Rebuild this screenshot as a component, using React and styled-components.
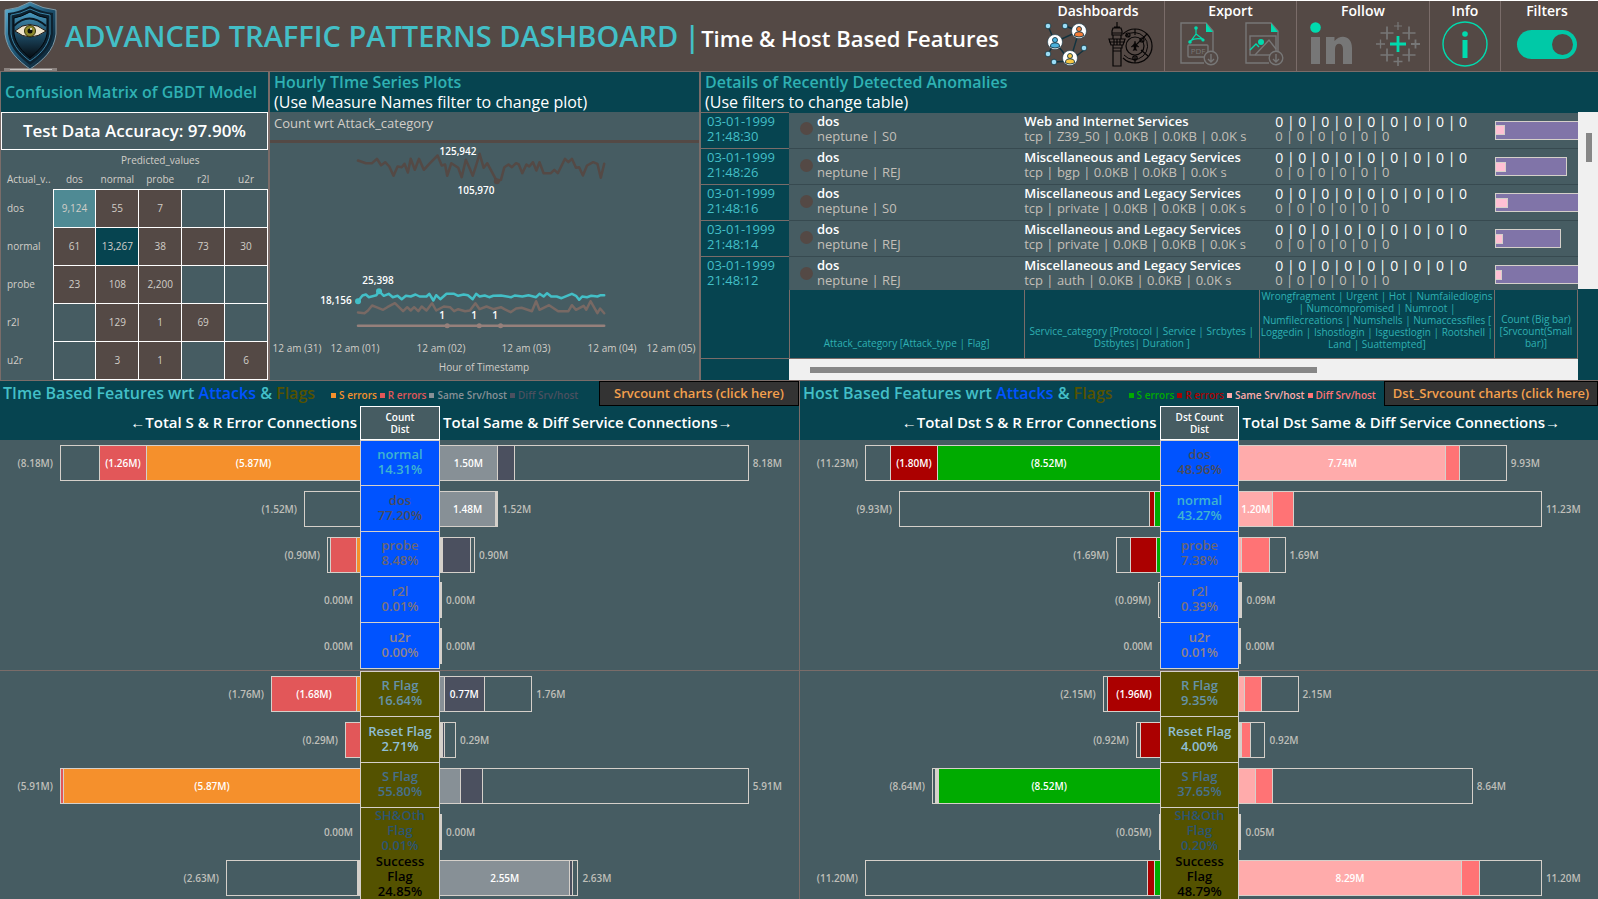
import React from 'react';
import styled, { createGlobalStyle, css } from 'styled-components';

const c = {
  slate: '#465c62',
  teal: '#064450',
  brown: '#544945',
  rule: '#7a6c69',
  cyan: '#43bfc7',
  title: '#2fb1b3',
  mint: '#00dbae',
  line: '#d5d0ca',
  text: '#d2cec8',
  gray: '#777777',
  blue: '#0053ff',
  olive: '#545200',
};

const GlobalStyle = createGlobalStyle`
  * { box-sizing: border-box; }
  body {
    margin: 0;
    background: ${c.slate};
    color: ${c.text};
    font-family: "Trebuchet MS", "Open Sans", "Noto Sans", sans-serif;
    font-size: 10px;
    font-weight: 500;
  }
  h1, h2, h3, p { margin: 0; font-weight: inherit; font-size: inherit; }
  table { border-collapse: collapse; border-spacing: 0; }
  th, td { font-weight: inherit; padding: 0; }
  button, input { font: inherit; margin: 0; }
`;

const Page = styled.div`
  min-height: 100vh;
  border-top: 1px solid #ffffff;
  overflow: hidden;
`;

/* ---------- header ---------- */

const Header = styled.header`
  display: flex;
  align-items: stretch;
  height: 71px;
  background: ${c.brown};
  border-bottom: 1px solid ${c.rule};
`;

const Brand = styled.div`
  flex: 1;
  display: flex;
  align-items: center;
  min-width: 0;
  padding-left: 4px;
  white-space: nowrap;
`;

const Heading = styled.h1`
  display: flex;
  align-items: baseline;
  margin-left: 8px;
  padding-top: 2px;
  color: ${c.cyan};
  font-size: 29px;
  font-weight: 600;
  line-height: 40px;
`;

const Divider = styled.span`
  margin: 0 1px 0 6px;
`;

const Subheading = styled.span`
  color: #ffffff;
  font-size: 22px;
  font-weight: 600;
`;

const ToolGroup = styled.section`
  width: ${(p) => p.$width}px;
  flex: none;
  display: flex;
  flex-direction: column;
  align-items: center;
  padding-right: ${(p) => (p.$last ? 5 : 0)}px;
  border-left: ${(p) => (p.$first ? 'none' : `1px solid ${c.rule}`)};
`;

const ToolTitle = styled.h2`
  height: 20px;
  line-height: 20px;
  color: #ffffff;
  font-size: 14px;
  font-weight: 600;
`;

const ToolRow = styled.div`
  display: flex;
  align-items: center;
  gap: ${(p) => p.$gap || 0}px;
  height: 46px;
  padding-left: ${(p) => p.$inset || 0}px;
`;

const iconButton = css`
  display: flex;
  padding: 0;
  border: 0;
  background: none;
  cursor: pointer;
`;
const IconLink = styled.a`${iconButton}`;
const IconButton = styled.button`${iconButton}`;

const Toggle = styled.input`
  appearance: none;
  width: 60px;
  height: 29px;
  padding: 4px;
  border-radius: 15px;
  background: #00c9a7;
  display: flex;
  justify-content: flex-end;
  cursor: pointer;
  &::after {
    content: '';
    width: 21px;
    height: 21px;
    border-radius: 50%;
    background: ${c.brown};
  }
`;

/* ---------- upper panels ---------- */

const UpperGrid = styled.main`
  display: grid;
  grid-template-columns: 270fr 431fr 897fr;
  border-bottom: 1px solid ${c.rule};
`;

const Panel = styled.section`
  min-width: 0;
  display: flex;
  flex-direction: column;
  border-right: ${(p) => (p.$last ? 0 : 2)}px solid ${c.rule};
  border-left: ${(p) => (p.$first ? 1 : 0)}px solid ${c.rule};
`;

const PanelHead = styled.div`
  height: 40px;
  padding-left: 4px;
  display: flex;
  flex-direction: column;
  justify-content: center;
  background: ${c.teal};
  line-height: 20px;
  white-space: nowrap;
`;

const PanelTitle = styled.h2`
  color: ${c.title};
  font-size: 16px;
  font-weight: 600;
`;

const PanelHint = styled.p`
  color: #ffffff;
  font-size: 16px;
`;

const Accuracy = styled.p`
  height: 38px;
  border: 1px solid #ffffff;
  color: #ffffff;
  font-size: 17px;
  font-weight: 600;
  line-height: 36px;
  text-align: center;
`;

const MatrixTable = styled.table`
  width: 100%;
  table-layout: fixed;
  text-align: center;
  color: ${c.text};
`;
const MatrixCaption = styled.th`
  height: 19px;
`;
const MatrixHead = styled.th`
  height: 20px;
  text-align: ${(p) => (p.$left ? 'left' : 'center')};
  padding-left: ${(p) => (p.$left ? 6 : 0)}px;
  white-space: nowrap;
`;
const MatrixRow = styled.tr`
  height: 38px;
`;
const MatrixLabel = styled.th`
  padding-left: 6px;
  text-align: left;
`;
const MatrixCell = styled.td`
  border: 1px solid #ffffff;
  background: ${(p) => p.$fill};
`;

const PlotLabel = styled.h3`
  height: 31px;
  padding: 1px 4px 0;
  border-bottom: 3px solid ${c.brown};
  font-size: 13px;
  line-height: 20px;
  color: ${c.text};
`;

const Plot = styled.svg`
  display: block;
  width: 100%;
  flex: 1;
  height: 236px;
`;

/* ---------- anomalies table ---------- */

const TableFrame = styled.div`
  display: flex;
  flex: 1;
  background: ${c.teal};
`;
const TableMain = styled.div`
  flex: 1;
  min-width: 0;
`;
const AnomalyTable = styled.table`
  width: 100%;
  table-layout: fixed;
  font-size: 13px;
  line-height: 15px;
  white-space: nowrap;
`;
const DateCol = styled.col`
  width: 88px;
`;
const BarCol = styled.col`
  width: 83px;
`;
const AnomalyRow = styled.tr`
  height: ${(p) => (p.$cut ? 33 : 36)}px;
  background: ${c.slate};
`;
const AnomalyCell = styled.td`
  border-top: ${(p) => (p.$top ? 0 : 1)}px solid #374a50;
  padding: 0;
  color: #c3bfb8;
  font-weight: 400;
  vertical-align: top;
`;
const CellLines = styled.div`
  height: ${(p) => (p.$cut ? 32 : 35)}px;
  padding-top: 1px;
`;
const DateCell = styled.th`
  border-top: 1px solid ${c.rule};
  padding: 1px 0 0 6px;
  background: ${c.teal};
  color: ${c.cyan};
  text-align: left;
  vertical-align: top;
`;
const AttackLines = styled.div`
  display: flex;
  align-items: center;
  gap: 4px;
  padding-left: 11px;
`;
const Dot = styled.span`
  width: 13px;
  height: 13px;
  border-radius: 50%;
  background: ${c.brown};
`;
const Strong = styled.strong`
  display: block;
  color: #ffffff;
  font-weight: ${(p) => (p.$bold ? 600 : 500)};
`;
const Zeros = styled.div`
  padding-left: 16px;
`;
const WideZeros = styled(Strong)`
  font-size: 14px;
`;
const CountBar = styled.div`
  display: flex;
  align-items: center;
  width: ${(p) => p.$size}px;
  height: 19px;
  margin-top: 8px;
  border: 1px solid ${c.line};
  border-right-width: ${(p) => (p.$size > 80 ? 0 : 1)}px;
  background: #8074a8;
`;
const SmallBar = styled.div`
  width: ${(p) => p.$size}px;
  height: 10px;
  border: 1px solid ${c.line};
  border-left: 0;
  background: #ffc0d4;
`;
const FootRow = styled.tr`
  height: 69px;
  background: ${c.teal};
`;
const FootCell = styled.td`
  border: 1px solid ${c.rule};
  border-left-width: ${(p) => (p.$first ? 0 : 1)}px;
  border-top: 0;
  padding: 0 0 ${(p) => p.$bottom || 0}px;
  vertical-align: ${(p) => (p.$bottom ? 'bottom' : 'top')};
  color: ${c.title};
  font-size: 10px;
  line-height: 12px;
  text-align: center;
  white-space: normal;
`;
const ScrollX = styled.div`
  height: 21px;
  margin-left: 88px;
  padding: 8px 0 0 21px;
  background: #f0f0f0;
`;
const ThumbX = styled.div`
  width: 66%;
  height: 6px;
  background: #868686;
`;
const ScrollSide = styled.div`
  width: 20px;
  flex: none;
`;
const ScrollY = styled.div`
  height: 177px;
  padding: 21px 0 0 8px;
  background: #f0f0f0;
`;
const ThumbY = styled.div`
  width: 6px;
  height: 29px;
  background: #868686;
`;

/* ---------- lower diverging bar charts ---------- */

const LowerGrid = styled.div`
  display: grid;
  grid-template-columns: 800fr 798fr;
`;
const Half = styled.section`
  min-width: 0;
  border-right: ${(p) => (p.$first ? 1 : 0)}px solid ${c.rule};
`;
const HalfHead = styled.div`
  background: ${c.teal};
  white-space: nowrap;
`;
const TitleBar = styled.div`
  display: flex;
  align-items: center;
  height: 25px;
  padding-left: 3px;
`;
const HalfTitle = styled.h2`
  padding-bottom: 2px;
  color: ${c.cyan};
  font-size: 16px;
  font-weight: 600;
  line-height: 22px;
`;
const Tint = styled.span`
  color: ${(p) => p.$color};
`;
const Legend = styled.ul`
  display: flex;
  flex: 1;
  gap: 3px;
  margin: 3px 0 0 16px;
  padding: 0;
  list-style: none;
  font-weight: 600;
`;
const LegendItem = styled.li`
  display: flex;
  align-items: center;
  gap: 3px;
  color: ${(p) => p.$color};
  &::before {
    content: '';
    width: 5px;
    height: 5px;
    background: ${(p) => p.$color};
  }
`;
const ChartButton = styled.button`
  align-self: stretch;
  flex: none;
  width: ${(p) => p.$width}px;
  padding: 0 0 2px;
  border: 1px solid #000000;
  background: #333333;
  color: #f4a04e;
  font-size: 13px;
  font-weight: 600;
  line-height: 20px;
  cursor: pointer;
`;
const split = css`
  display: grid;
  grid-template-columns: 360fr 80fr 359fr;
`;
const AxisRow = styled.div`
  ${split}
  height: 34px;
  color: #ffffff;
  font-size: 10px;
  font-weight: 600;
`;
const AxisTitle = styled.h3`
  padding: 0 3px;
  font-size: 15px;
  line-height: 32px;
  text-align: ${(p) => (p.$left ? 'right' : 'left')};
`;
const AxisCenter = styled.div`
  display: flex;
  align-items: center;
  justify-content: center;
  border: 1px solid #ffffff;
  background: ${c.slate};
  line-height: 12px;
  text-align: center;
  white-space: pre-line;
`;
const Group = styled.div`
  display: grid;
  grid-template-rows: 46px 46px 45px 46px 46px;
  & + & {
    margin-top: 1px;
    border-top: 1px solid ${c.rule};
  }
`;
const ChartRow = styled.div`
  ${split}
`;
const Category = styled.div`
  display: flex;
  align-items: center;
  justify-content: center;
  padding-bottom: 2px;
  border: 1px solid ${c.line};
  border-top-width: ${(p) => (p.$top ? 1 : 0)}px;
  background: ${(p) => p.$fill};
  color: ${(p) => p.$ink};
  font-size: 13px;
  font-weight: 600;
  line-height: 15px;
  text-align: center;
  white-space: pre-line;
`;
const Side = styled.div`
  display: flex;
  flex-direction: ${(p) => (p.$left ? 'row-reverse' : 'row')};
  align-items: center;
  gap: ${(p) => (p.$left ? 7 : 4)}px;
  min-width: 0;
`;
const Bar = styled.div`
  display: flex;
  height: 36px;
  border: 1px solid ${c.line};
  border-right-width: ${(p) => (p.$left ? 0 : 1)}px;
  border-left-width: ${(p) => (p.$left ? 1 : 0)}px;
`;
const Segment = styled.div`
  display: flex;
  align-items: center;
  justify-content: center;
  flex: ${(p) => p.$size} 1 0;
  min-width: 0;
  background: ${(p) => p.$fill};
  color: #ffffff;
  font-weight: 600;
  white-space: nowrap;
  & + & {
    border-left: 1px solid ${c.line};
  }
`;
const Total = styled.span`
  color: #bfbfb9;
  font-weight: 600;
`;

/* ---------- drawings ---------- */

const ShieldLogo = () => (
  <svg width="53" height="70" viewBox="0 0 53 70" aria-label="Shield logo">
    <defs>
      <linearGradient id="steel" x1="0" y1="0" x2="1" y2="1">
        <stop offset="0" stopColor="#5fb4d8" />
        <stop offset=".45" stopColor="#1f5878" />
        <stop offset="1" stopColor="#06121c" />
      </linearGradient>
      <linearGradient id="face" x1="0" y1="0" x2="0" y2="1">
        <stop offset="0" stopColor="#4b9cc2" />
        <stop offset=".5" stopColor="#1d4a63" />
        <stop offset="1" stopColor="#050b11" />
      </linearGradient>
    </defs>
    <path d="M0 67h53v3H0z" fill="#8a827f" />
    <path d="M6 68h42v1H6z" fill="#c9c4c1" />
    <path d="M26 1Q14 8 1 9V33C3 50 15 60 26 68C38 60 50 50 52 33V9Q39 8 26 1Z" fill="url(#steel)" stroke="#7d9aa8" />
    <path d="M26 5Q15 11 4 12V33C6 48 17 57 26 64C36 57 47 48 49 33V12Q38 11 26 5Z" fill="#0d2230" />
    <path d="M26 8Q16 13 7 14V33C9 46 18 54 26 60C35 54 44 46 46 33V14Q36 13 26 8Z" fill="none" stroke="#3a83a6" />
    <path d="M26 11Q17 16 10 17V33C12 44 19 51 26 57C33 51 41 44 43 33V17Q35 16 26 11Z" fill="url(#face)" stroke="#02070b" />
    <path d="M10 25Q25 10 42 25" fill="none" stroke="#0a1822" strokeWidth="2" />
    <path d="M11 30Q25 17 42 30Q26 42 11 30Z" fill="#efe4cb" stroke="#1b1512" />
    <circle cx="26" cy="30" r="5.500" fill="#8f8a2c" stroke="#34340f" />
    <circle cx="26" cy="30" r="2.500" fill="#0c0c08" />
    <circle cx="27" cy="28" r="1" fill="#fff" />
  </svg>
);

const Person = ({ x, y, color }) => (
  <g transform={`translate(${x} ${y})`}>
    <circle r="7.5" fill="#fff" stroke="#17394a" strokeWidth=".6" />
    <circle cy="-2" r="2.5" fill={color} stroke="#143949" strokeWidth=".9" />
    <path d="M-4.4 5V3Q-4 .8 0 .8T4.4 3V5Q0 7 -4.4 5Z" fill={color} stroke="#143949" strokeWidth=".9" />
  </g>
);

const NetworkIcon = () => (
  <svg width="44" height="44" viewBox="0 0 44 44">
    <path d="M4 4L11 20L35 9L26 39L40 28M11 20L26 39M11 20L4 32M21 4L35 9M26 39L10 40" fill="none" stroke="#12333f" strokeWidth="1.4" />
    {[[4, 4], [21, 4], [40, 26], [4, 32], [10, 40]].map(([x, y]) => (
      <circle key={`${x}-${y}`} cx={x} cy={y} r="2.8" fill="#9bdcf5" stroke="#12333f" strokeWidth=".8" />
    ))}
    <Person x={35} y={9} color="#f47c36" />
    <Person x={11} y={20} color="#4cb2dd" />
    <Person x={26} y={36} color="#f8c642" />
  </svg>
);

const RadarIcon = () => (
  <svg width="45" height="45" viewBox="0 0 45 45" fill="none" stroke="#080606" strokeWidth="1.2">
    <path d="M9 0V5M6 5H12M4 9L5 6H13L14 9V13H4ZM5 13V17M13 13V17M1 17H17L15 23H3ZM5 23V26H14V23M5 26V44H13V26M1 20H17M6 17V23M9 17V23M12 17V23M4 11H14M5 29H13" />
    <path d="M15 12A17 17 0 1 1 15 36" />
    <path d="M17 14A13.5 13.5 0 1 1 16 33" strokeWidth="1" />
    <circle cx="27" cy="24" r="9" />
    <path d="M27 7V13M27 35V41M27 24L39 12M18 11L21 15M33 28L40 34" />
    <circle cx="20" cy="13" r="2" /><circle cx="34" cy="18" r="2" /><circle cx="27" cy="36" r="2.2" />
    <path d="M27 19L28 22L31 25L28 24.500V27L29 28.500L27 28L25 28.500L26 27V24.500L23 25L26 22Z" fill="#080606" strokeWidth=".5" />
  </svg>
);

const DownloadBadge = () => (
  <>
    <circle cx="31" cy="36" r="6.800" fill={c.brown} />
    <path d="M31 32V40M28 37L31 40L34 37" />
  </>
);

const PdfIcon = () => (
  <svg width="40" height="44" viewBox="0 0 40 44" fill="none" stroke={c.gray} strokeWidth="1.4">
    <path d="M24 41H1V1H26L33 9V29" />
    <path d="M26 1V10H33Z" fill={c.mint} stroke="none" />
    <path d="M16 6V12L10 20M16 12L24 18M10 19Q17 15 24 18" stroke={c.mint} strokeWidth="1.2" />
    <circle cx="16" cy="6" r="1.800" fill={c.mint} stroke="none" /><circle cx="10" cy="20" r="1.800" fill={c.mint} stroke="none" /><circle cx="23" cy="18" r="1.600" fill={c.mint} stroke="none" />
    <rect x="8" y="23" width="20" height="12" rx="1" fill={c.brown} />
    <text x="18" y="32" textAnchor="middle" fontSize="8" fill={c.gray} stroke="none">PDF</text>
    <DownloadBadge />
  </svg>
);

const ImageIcon = () => (
  <svg width="40" height="44" viewBox="0 0 40 44" fill="none" stroke={c.gray} strokeWidth="1.4">
    <path d="M24 41H1V1H26L33 9V29" />
    <path d="M26 1V10H33Z" fill={c.mint} stroke="none" />
    <rect x="5" y="14" width="26" height="19" />
    <path d="M10 33L24 18L31 27" />
    <path d="M5 28L11 22L14 25" stroke={c.mint} />
    <circle cx="16" cy="20" r="3" fill={c.mint} stroke="none" />
    <DownloadBadge />
  </svg>
);

const LinkedInIcon = () => (
  <svg width="42" height="44" viewBox="0 0 42 44" fill={c.gray}>
    <circle cx="5.500" cy="5.500" r="5.300" fill={c.mint} />
    <path d="M1 15H10V42H1ZM16 15H24.500V19C30 12 42 13 42 26V42H33V27C33 20 25 20 25 27V42H16Z" />
  </svg>
);

const PLUSES = [
  [22, 4, 4, 1.2], [11, 11, 6.500, 1.7], [33, 11, 6.500, 1.7], [4.500, 22, 4.500, 1.3],
  [39.500, 22, 4.500, 1.8], [11, 33, 6.500, 1.7], [33, 33, 6.500, 1.7], [22, 39.500, 4.500, 1.6],
];
const TableauIcon = () => (
  <svg width="44" height="44" viewBox="0 0 44 44" fill="none">
    {PLUSES.map(([x, y, r, w]) => (
      <path key={`${x}-${y}`} d={`M${x - r} ${y}h${2 * r}M${x} ${y - r}v${2 * r}`} stroke={c.gray} strokeWidth={w} />
    ))}
    <path d="M14 22H30M22 14V30" stroke={c.mint} strokeWidth="2.800" />
  </svg>
);

const InfoIcon = () => (
  <svg width="46" height="46" viewBox="0 0 46 46" fill={c.mint}>
    <circle cx="23" cy="23" r="22" fill="none" stroke={c.mint} strokeWidth="1.4" />
    <circle cx="23" cy="13" r="2.800" />
    <path d="M20.500 19H25.500V37H20.500Z" />
  </svg>
);

/* ---------- hourly series ---------- */

const SERIES = [
  {
    name: 'dos', color: '#544945',
    points: '0,480 23,488 41,488 55,475 67,494 79,485 91,498 103,526 115,498 127,500 135,490 145,516 153,475 165,508 177,475 191,508 207,490 231,465 243,495 253,492 259,526 271,488 281,495 291,502 301,530 313,478 323,500 333,526 343,495 353,460 365,502 375,488 389,515 403,542 415,538 425,500 437,492 447,500 459,488 467,492 477,518 489,492 497,498 508,485 518,510 527,485 539,518 560,518 570,508 580,518 601,475 611,485 621,475 633,502 642,500 653,525 665,495 683,485 695,490 705,532 715,490',
  },
  {
    name: 'normal', color: '#43bfc7',
    points: '0,902 13,885 23,882 31,890 53,884 61,872 75,886 89,880 101,890 115,886 127,896 139,886 153,888 167,882 179,888 199,888 207,880 219,900 227,884 239,896 257,880 279,880 291,886 307,882 319,884 333,896 343,880 353,888 368,885 381,890 393,886 415,885 445,890 455,885 477,888 495,884 517,890 527,880 539,888 549,878 561,888 577,888 591,893 621,880 633,886 642,898 651,888 665,890 677,886 695,888 705,884 715,884',
  },
  {
    name: 'probe', color: '#786964',
    points: '0,936 19,938 29,930 41,915 53,920 73,928 85,920 107,908 119,920 131,932 143,920 153,930 163,920 175,932 185,918 199,930 215,908 227,930 249,918 267,920 279,932 291,926 311,932 325,930 341,908 353,926 373,918 393,926 415,920 425,926 443,935 459,924 475,922 505,932 517,902 527,928 555,914 581,932 611,932 621,914 633,928 655,916 663,928 675,902 695,938 703,924 715,938',
  },
  { name: 'u2r', color: '#96807b', points: '0,976 715,976' },
];
const plotX = (v) => 88 + v * 0.3444;
const plotY = (v) => (v - 429) / 3;
const toPath = (points) =>
  points.split(' ').map((p) => {
    const [x, y] = p.split(',').map(Number);
    return `${plotX(x).toFixed(1)},${plotY(y).toFixed(1)}`;
  }).join(' ');

const MARKS = [
  [403, 542, 3, '#544945'], [0, 902, 3, '#43bfc7'], [61, 872, 3, '#43bfc7'],
  [259, 976, 2.5, '#96807b'], [352, 976, 2.5, '#96807b'], [414, 976, 2.5, '#96807b'],
];
const VALUE_LABELS = [
  [188, 11, '125,942'], [206, 50, '105,970'], [108, 140, '25,398'], [66, 160, '18,156'],
  [172, 175, '1'], [204, 175, '1'], [225, 175, '1'],
];
const TICKS = [
  [27, '12 am (31)'], [85, '12 am (01)'], [171, '12 am (02)'],
  [256, '12 am (03)'], [342, '12 am (04)'], [401, '12 am (05)'],
];

const HourlyPlot = () => (
  <Plot viewBox="0 0 429 236" role="img" aria-label="Count by hour of timestamp">
    {SERIES.map((s) => (
      <polyline key={s.name} points={toPath(s.points)} fill="none" stroke={s.color} strokeWidth="2.5" strokeLinejoin="round" strokeLinecap="round" />
    ))}
    {MARKS.map(([x, y, r, color]) => (
      <circle key={`${x}-${y}`} cx={plotX(x)} cy={plotY(y)} r={r} fill={color} />
    ))}
    <g textAnchor="middle" fontSize="10" fontWeight="600" fill="#ffffff">
      {VALUE_LABELS.map(([x, y, label]) => <text key={x} x={x} y={y}>{label}</text>)}
    </g>
    <g textAnchor="middle" fontSize="10" fill={c.text}>
      {TICKS.map(([x, label]) => <text key={x} x={x} y="208">{label}</text>)}
      <text x="214" y="227">Hour of Timestamp</text>
    </g>
  </Plot>
);

/* ---------- data ---------- */

const CLASSES = ['dos', 'normal', 'probe', 'r2l', 'u2r'];
const MATRIX = [
  ['9,124', '55', '7', '', ''],
  ['61', '13,267', '38', '73', '30'],
  ['23', '108', '2,200', '', ''],
  ['', '129', '1', '69', ''],
  ['', '3', '1', '', '6'],
];
const cellFill = (v) => {
  if (v === '9,124') return '#4f8a94';
  if (v === '13,267') return c.teal;
  return v ? c.brown : 'transparent';
};

const MISC = 'Miscellaneous and Legacy Services';
const ANOMALIES = [
  { time: '21:48:30', flag: 'S0', service: 'Web and Internet Services', port: 'Z39_50', bar: 83, small: 9 },
  { time: '21:48:26', flag: 'REJ', service: MISC, port: 'bgp', bar: 72, small: 10 },
  { time: '21:48:16', flag: 'S0', service: MISC, port: 'private', bar: 83, small: 12 },
  { time: '21:48:14', flag: 'REJ', service: MISC, port: 'private', bar: 66, small: 7 },
  { time: '21:48:12', flag: 'REJ', service: MISC, port: 'auth', bar: 83, small: 6 },
];
const zeros = (n) => Array(n).fill('0').join(' | ');

const NONE = 'transparent';
const LEFT_PALETTE = { s: '#f5902c', r: '#e25759', same: '#879096', diff: '#4b505f', x: NONE, l: c.line };
const RIGHT_PALETTE = { s: '#00ab00', r: '#ab0000', same: '#ffabab', diff: '#ff7375', x: NONE, l: c.line };
const INK = {
  normal: '#3fb4cf', dos: '#4b4c5c', probe: '#6a6672', r2l: '#7d747c', u2r: '#918489',
  rf: '#6593a8', reset: '#8fbfd6', sf: '#46708c', sh: '#2b5573', ok: '#000000',
};

/* Each bar is a list of [kind, units, label], in the order drawn. */
const TIME_ROWS = [
  [
    { name: 'normal', pct: '14.31%', ink: INK.normal, left: [['x', 38], ['r', 47, '(1.26M)'], ['s', 215, '(5.87M)']], lt: '(8.18M)', right: [['same', 57, '1.50M'], ['diff', 17], ['x', 234]], rt: '8.18M' },
    { name: 'dos', pct: '77.20%', ink: INK.dos, left: [['x', 56]], lt: '(1.52M)', right: [['same', 57, '1.48M'], ['l', 1]], rt: '1.52M' },
    { name: 'probe', pct: '8.48%', ink: INK.probe, left: [['x', 2], ['r', 28], ['s', 3]], lt: '(0.90M)', right: [['l', 2], ['diff', 30], ['x', 3]], rt: '0.90M' },
    { name: 'r2l', pct: '0.01%', ink: INK.r2l, left: [], lt: '0.00M', right: [['l', 2]], rt: '0.00M' },
    { name: 'u2r', pct: '0.00%', ink: INK.u2r, left: [], lt: '0.00M', right: [['l', 2]], rt: '0.00M' },
  ],
  [
    { name: 'R Flag', pct: '16.64%', ink: INK.rf, left: [['r', 86, '(1.68M)'], ['s', 3]], lt: '(1.76M)', right: [['same', 4], ['diff', 40, '0.77M'], ['x', 48]], rt: '1.76M' },
    { name: 'Reset Flag', pct: '2.71%', ink: INK.reset, left: [['r', 15]], lt: '(0.29M)', right: [['l', 2], ['diff', 2], ['x', 12]], rt: '0.29M' },
    { name: 'S Flag', pct: '55.80%', ink: INK.sf, left: [['r', 2], ['s', 298, '(5.87M)']], lt: '(5.91M)', right: [['same', 20], ['diff', 21], ['x', 267]], rt: '5.91M' },
    { name: 'SH&Oth\nFlag', pct: '0.01%', ink: INK.sh, left: [], lt: '0.00M', right: [['l', 2]], rt: '0.00M' },
    { name: 'Success\nFlag', pct: '24.85%', ink: INK.ok, left: [['x', 132], ['l', 2]], lt: '(2.63M)', right: [['same', 132, '2.55M'], ['diff', 2], ['x', 4]], rt: '2.63M' },
  ],
];
const HOST_ROWS = [
  [
    { name: 'dos', pct: '48.96%', ink: INK.dos, left: [['x', 24], ['r', 47, '(1.80M)'], ['s', 224, '(8.52M)']], lt: '(11.23M)', right: [['same', 208, '7.74M'], ['diff', 13], ['x', 46]], rt: '9.93M' },
    { name: 'normal', pct: '43.27%', ink: INK.normal, left: [['x', 252], ['r', 4], ['s', 5]], lt: '(9.93M)', right: [['same', 33, '1.20M'], ['diff', 20], ['x', 249]], rt: '11.23M' },
    { name: 'probe', pct: '7.38%', ink: INK.probe, left: [['x', 14], ['r', 27], ['s', 3]], lt: '(1.69M)', right: [['same', 2], ['diff', 28], ['x', 16]], rt: '1.69M' },
    { name: 'r2l', pct: '0.39%', ink: INK.r2l, left: [['x', 2]], lt: '(0.09M)', right: [['l', 3]], rt: '0.09M' },
    { name: 'u2r', pct: '0.01%', ink: INK.u2r, left: [], lt: '0.00M', right: [['l', 2]], rt: '0.00M' },
  ],
  [
    { name: 'R Flag', pct: '9.35%', ink: INK.rf, left: [['x', 4], ['r', 53, '(1.96M)']], lt: '(2.15M)', right: [['same', 5], ['diff', 17], ['x', 37]], rt: '2.15M' },
    { name: 'Reset Flag', pct: '4.00%', ink: INK.reset, left: [['x', 4], ['r', 20]], lt: '(0.92M)', right: [['l', 2], ['diff', 9], ['x', 15]], rt: '0.92M' },
    { name: 'S Flag', pct: '37.65%', ink: INK.sf, left: [['x', 2], ['l', 2], ['s', 224, '(8.52M)']], lt: '(8.64M)', right: [['same', 16], ['diff', 16], ['x', 201]], rt: '8.64M' },
    { name: 'SH&Oth\nFlag', pct: '0.20%', ink: INK.sh, left: [['l', 1]], lt: '(0.05M)', right: [['l', 2]], rt: '0.05M' },
    { name: 'Success\nFlag', pct: '48.79%', ink: INK.ok, left: [['x', 284], ['r', 6], ['s', 5]], lt: '(11.20M)', right: [['same', 223, '8.29M'], ['diff', 18], ['x', 61]], rt: '11.20M' },
  ],
];

/* ---------- composed parts ---------- */

const LEFT_UNITS = 360;
const RIGHT_UNITS = 358;

const SideBar = ({ segments, total, palette, left }) => {
  const units = segments.reduce((sum, s) => sum + s[1], 0);
  const scale = left ? LEFT_UNITS : RIGHT_UNITS;
  return (
    <Side $left={left}>
      {units > 0 ? (
        <Bar $left={left} style={{ width: `${(units / scale) * 100}%` }}>
          {segments.map(([kind, size, label], i) => (
            <Segment key={i} $size={size} $fill={palette[kind]}>{label}</Segment>
          ))}
        </Bar>
      ) : <span />}
      <Total>{total}</Total>
    </Side>
  );
};

const FeatureHalf = ({ first, title, palette, legend, button, buttonWidth, leftTitle, center, rightTitle, groups }) => (
  <Half $first={first}>
    <HalfHead>
      <TitleBar>
        <HalfTitle>
          {title} <Tint $color={c.blue}>Attacks</Tint> &amp; <Tint $color={c.olive}>Flags</Tint>
        </HalfTitle>
        <Legend>
          {['S errors', 'R errors', 'Same Srv/host', 'Diff Srv/host'].map((label, i) => (
            <LegendItem key={label} $color={legend[i]}>{label}</LegendItem>
          ))}
        </Legend>
        <ChartButton type="button" $width={buttonWidth}>{button}</ChartButton>
      </TitleBar>
      <AxisRow>
        <AxisTitle $left>{leftTitle}</AxisTitle>
        <AxisCenter>{center}</AxisCenter>
        <AxisTitle>{rightTitle}</AxisTitle>
      </AxisRow>
    </HalfHead>
    {groups.map((rows, g) => (
      <Group key={g}>
        {rows.map((row, i) => (
          <ChartRow key={row.name}>
            <SideBar left segments={row.left} total={row.lt} palette={palette} />
            <Category $top={i === 0} $fill={g ? c.olive : c.blue} $ink={row.ink}>{`${row.name}\n${row.pct}`}</Category>
            <SideBar segments={row.right} total={row.rt} palette={palette} />
          </ChartRow>
        ))}
      </Group>
    ))}
  </Half>
);

const FOOT = [
  ['Attack_category [Attack_type | Flag]', 9],
  ['Service_category [Protocol | Service | Srcbytes | Dstbytes| Duration ]', 9],
  ['Wrongfragment | Urgent | Hot | Numfailedlogins | Numcompromised | Numroot | Numfilecreations | Numshells | Numaccessfiles [ Loggedin | Ishostlogin | Isguestlogin | Rootshell | Land | Suattempted]', 0],
  ['Count (Big bar) [Srvcount(Small bar)]', 9],
];

export default function App() {
  return (
    <Page>
      <GlobalStyle />
      <Header>
        <Brand>
          <ShieldLogo />
          <Heading>
            ADVANCED TRAFFIC PATTERNS DASHBOARD
            <Divider>|</Divider>
            <Subheading>Time &amp; Host Based Features</Subheading>
          </Heading>
        </Brand>
        <ToolGroup $first $width={132}>
          <ToolTitle>Dashboards</ToolTitle>
          <ToolRow $gap={20}>
            <IconLink href="#network" aria-label="Network dashboard"><NetworkIcon /></IconLink>
            <IconLink href="#traffic" aria-label="Traffic dashboard"><RadarIcon /></IconLink>
          </ToolRow>
        </ToolGroup>
        <ToolGroup $width={132}>
          <ToolTitle>Export</ToolTitle>
          <ToolRow $gap={25} $inset={4}>
            <IconButton type="button" aria-label="Export PDF"><PdfIcon /></IconButton>
            <IconButton type="button" aria-label="Export image"><ImageIcon /></IconButton>
          </ToolRow>
        </ToolGroup>
        <ToolGroup $width={133}>
          <ToolTitle>Follow</ToolTitle>
          <ToolRow $gap={24} $inset={4}>
            <IconLink href="#linkedin" aria-label="LinkedIn"><LinkedInIcon /></IconLink>
            <IconLink href="#tableau" aria-label="Tableau"><TableauIcon /></IconLink>
          </ToolRow>
        </ToolGroup>
        <ToolGroup $width={71}>
          <ToolTitle>Info</ToolTitle>
          <ToolRow>
            <IconButton type="button" aria-label="Info"><InfoIcon /></IconButton>
          </ToolRow>
        </ToolGroup>
        <ToolGroup $last $width={98}>
          <ToolTitle as="label" htmlFor="filters">Filters</ToolTitle>
          <ToolRow>
            <Toggle id="filters" type="checkbox" defaultChecked />
          </ToolRow>
        </ToolGroup>
      </Header>

      <UpperGrid>
        <Panel $first>
          <PanelHead><PanelTitle>Confusion Matrix of GBDT Model</PanelTitle></PanelHead>
          <Accuracy>Test Data Accuracy: 97.90%</Accuracy>
          <MatrixTable>
            <colgroup><col width="52" />{CLASSES.map((k) => <col key={k} />)}</colgroup>
            <thead>
              <tr><td /><MatrixCaption colSpan={5}>Predicted_values</MatrixCaption></tr>
              <tr>
                <MatrixHead $left>Actual_v..</MatrixHead>
                {CLASSES.map((k) => <MatrixHead key={k}>{k}</MatrixHead>)}
              </tr>
            </thead>
            <tbody>
              {MATRIX.map((row, r) => (
                <MatrixRow key={CLASSES[r]}>
                  <MatrixLabel>{CLASSES[r]}</MatrixLabel>
                  {row.map((v, i) => <MatrixCell key={i} $fill={cellFill(v)}>{v}</MatrixCell>)}
                </MatrixRow>
              ))}
            </tbody>
          </MatrixTable>
        </Panel>

        <Panel>
          <PanelHead>
            <PanelTitle>Hourly TIme Series Plots</PanelTitle>
            <PanelHint>(Use Measure Names filter to change plot)</PanelHint>
          </PanelHead>
          <PlotLabel>Count wrt Attack_category</PlotLabel>
          <HourlyPlot />
        </Panel>

        <Panel $last>
          <PanelHead>
            <PanelTitle>Details of Recently Detected Anomalies</PanelTitle>
            <PanelHint>(Use filters to change table)</PanelHint>
          </PanelHead>
          <TableFrame>
            <TableMain>
              <AnomalyTable>
                <colgroup><DateCol /><col /><col /><col /><BarCol /></colgroup>
                <tbody>
                  {ANOMALIES.map((a, i) => {
                    const cut = i === ANOMALIES.length - 1;
                    return (
                      <AnomalyRow key={a.time} $cut={cut}>
                        <DateCell>03-01-1999<br />{a.time}</DateCell>
                        <AnomalyCell $top={!i}>
                          <CellLines $cut={cut}>
                            <AttackLines>
                              <Dot />
                              <div><Strong $bold>dos</Strong>neptune | {a.flag}</div>
                            </AttackLines>
                          </CellLines>
                        </AnomalyCell>
                        <AnomalyCell $top={!i}>
                          <CellLines $cut={cut}>
                            <Strong $bold>{a.service}</Strong>tcp | {a.port} | 0.0KB | 0.0KB | 0.0K s
                          </CellLines>
                        </AnomalyCell>
                        <AnomalyCell $top={!i}>
                          <CellLines $cut={cut}>
                            <Zeros><WideZeros>{zeros(9)}</WideZeros>{zeros(6)}</Zeros>
                          </CellLines>
                        </AnomalyCell>
                        <AnomalyCell $top={!i}>
                          <CountBar $size={a.bar}><SmallBar $size={a.small} /></CountBar>
                        </AnomalyCell>
                      </AnomalyRow>
                    );
                  })}
                </tbody>
                <tfoot>
                  <FootRow>
                    <FootCell $first />
                    {FOOT.map(([label, bottom]) => <FootCell key={label} $bottom={bottom}>{label}</FootCell>)}
                  </FootRow>
                </tfoot>
              </AnomalyTable>
              <ScrollX><ThumbX /></ScrollX>
            </TableMain>
            <ScrollSide><ScrollY><ThumbY /></ScrollY></ScrollSide>
          </TableFrame>
        </Panel>
      </UpperGrid>

      <LowerGrid>
        <FeatureHalf
          first
          title="TIme Based Features wrt"
          palette={LEFT_PALETTE}
          legend={['#f5902c', '#e25759', '#879096', '#4b505f']}
          button="Srvcount charts (click here)"
          buttonWidth={200}
          leftTitle="←Total S & R Error Connections"
          center={'Count\nDist'}
          rightTitle="Total Same & Diff Service Connections→"
          groups={TIME_ROWS}
        />
        <FeatureHalf
          title="Host Based Features wrt"
          palette={RIGHT_PALETTE}
          legend={['#00ab00', '#ab0000', '#ffabab', '#ff7375']}
          button="Dst_Srvcount charts (click here)"
          buttonWidth={214}
          leftTitle="←Total Dst S & R Error Connections"
          center={'Dst Count\nDist'}
          rightTitle="Total Dst Same & Diff Service Connections→"
          groups={HOST_ROWS}
        />
      </LowerGrid>
    </Page>
  );
}
